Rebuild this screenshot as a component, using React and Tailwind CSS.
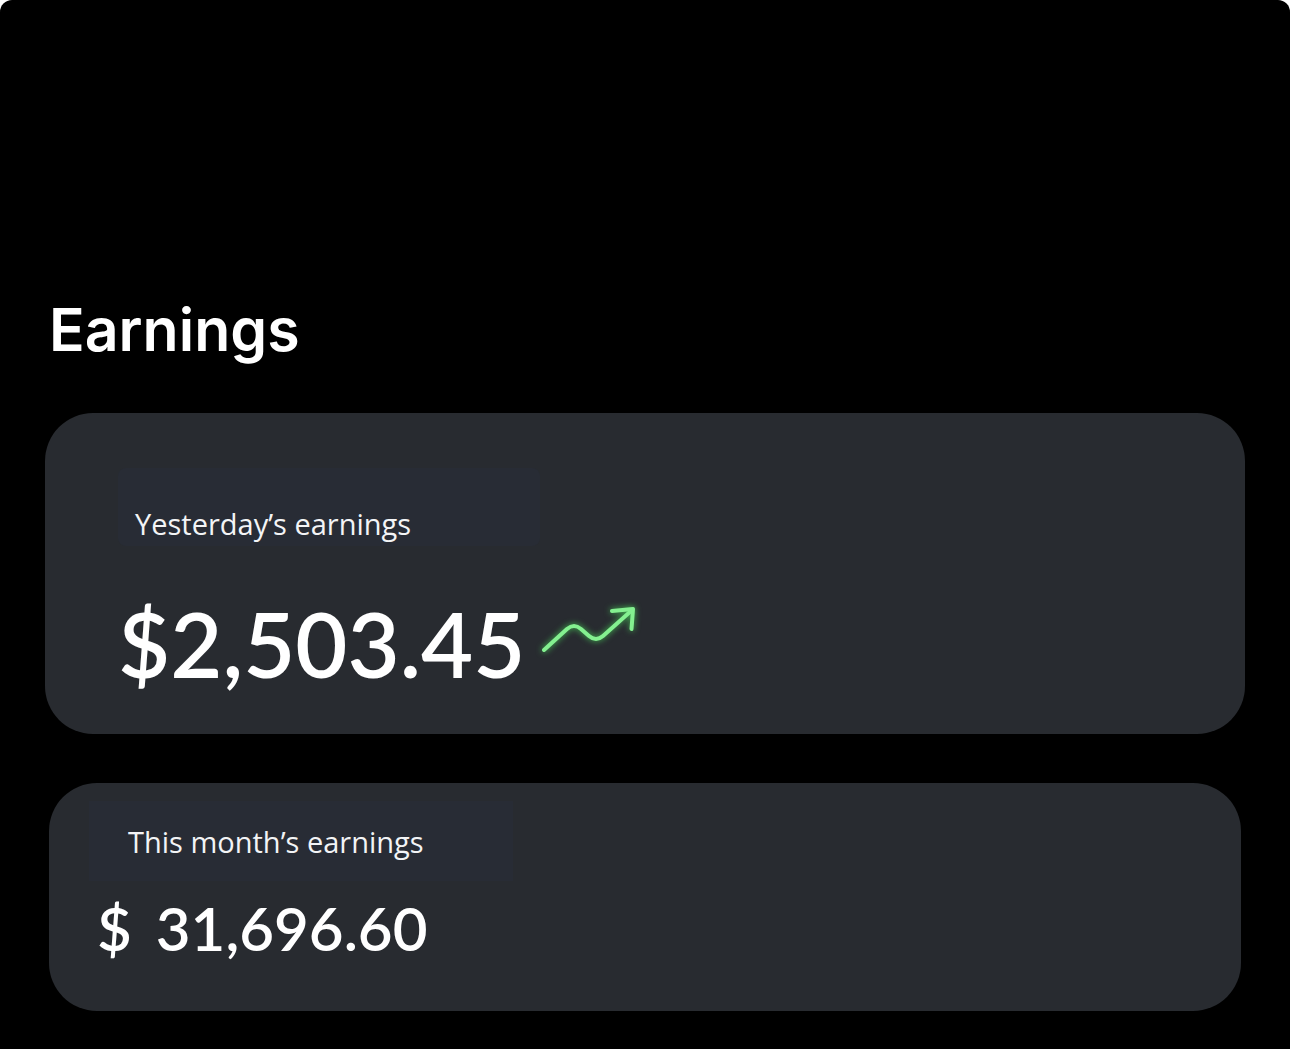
const TrendArrow = () => (
  <svg
    viewBox="0 0 140 80"
    fill="none"
    stroke="#84f090"
    strokeWidth="4"
    strokeLinecap="round"
    strokeLinejoin="round"
    className="w-[140px] h-[80px] -ml-1 shrink-0 drop-shadow-[0_0_3px_#45c455]"
    aria-hidden="true"
  >
    <path d="M23 60 L46 39 Q53 33 60 39 L68 46 Q75 52 82 46 L110 21" />
    <path d="M91 21 L112 19 L110.500 39" />
  </svg>
);

const App = () => {
  return (
    <div className="min-h-screen bg-white">
      <main className="min-h-screen rounded-t-xl bg-black px-[45px] pt-[298px] pb-[37px] text-white">
        <h1 className="pl-1 font-['Inter',sans-serif] text-[59px] leading-[64px] font-semibold">
          Earnings
        </h1>

        {/* Yesterday */}
        <section className="mt-[51px] rounded-[48px] bg-[#282b30] px-[73px] pt-[55px] pb-[38px]">
          <h2 className="w-[422px] max-w-full rounded-lg bg-[#282c35] pl-[17px] pt-[37px] pb-[3px] font-['Open_Sans',sans-serif] text-[29px] leading-[38px] font-normal text-gray-100">
            Yesterday’s earnings
          </h2>
          <div className="mt-[44px] flex items-start">
            <p className="font-['Lato',sans-serif] text-[90px] leading-[106px] font-semibold">
              $2,503.45
            </p>
            <TrendArrow />
          </div>
        </section>

        {/* This month */}
        <section className="mx-[4px] mt-[49px] rounded-[48px] bg-[#282b30] px-[40px] pt-[18px] pb-[48px]">
          <h2 className="w-[424px] max-w-full bg-[#282c35] pl-[39px] pt-[22px] pb-[20px] font-['Open_Sans',sans-serif] text-[29px] leading-[38px] font-normal text-gray-100">
            This month’s earnings
          </h2>
          <p className="mt-3 flex gap-6 pl-2 font-['Lato',sans-serif] text-[60px] leading-[70px] font-semibold">
            <span>$</span>
            <span>31,696.60</span>
          </p>
        </section>
      </main>
    </div>
  );
};

export default App;
